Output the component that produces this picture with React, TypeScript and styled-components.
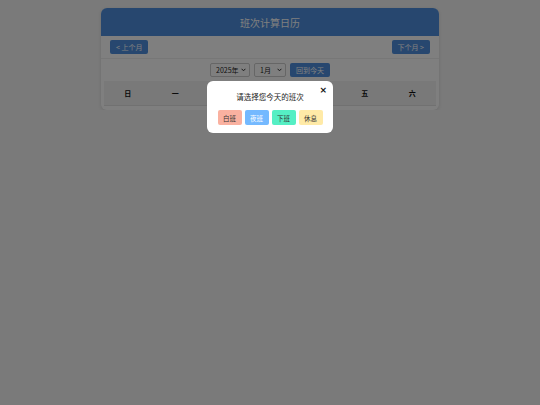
import React, { useState } from 'react'
import styled, { createGlobalStyle } from 'styled-components'

const GlobalStyle = createGlobalStyle`
  * { box-sizing: border-box; }
  body {
    margin: 0;
    background: #f5f5f5;
    font-family: "Noto Sans CJK SC", "Noto Sans", sans-serif;
    color: #333;
  }
`

const Page = styled.div`
  padding-top: 8px;
`

const Card = styled.div`
  width: 338px;
  margin: 0 auto;
  background: #fff;
  border-radius: 6px;
  box-shadow: 0 1px 4px rgba(0, 0, 0, 0.12);
  padding-bottom: 4px;
`

const Header = styled.div`
  height: 28px;
  background: #4f8fde;
  border-radius: 6px 6px 0 0;
  display: flex;
  align-items: center;
  justify-content: center;
  color: #fff;
  font-size: 10px;
`

const Nav = styled.div`
  display: flex;
  justify-content: space-between;
  align-items: center;
  padding: 4px 9px;
  border-bottom: 1px solid #eee;
`

const BlueButton = styled.button`
  height: 14px;
  padding: 0 6px;
  border: none;
  border-radius: 2px;
  background: #4f8fde;
  color: #fff;
  font-family: inherit;
  font-size: 7px;
  line-height: 14px;
`

const Controls = styled.div`
  display: flex;
  justify-content: center;
  align-items: center;
  gap: 4px;
  padding: 4px 0 4px;
`

const SelectWrap = styled.span<{ w: number }>`
  position: relative;
  display: inline-flex;
  width: ${p => p.w}px;
  height: 14px;
  svg {
    position: absolute;
    right: 4px;
    top: 5px;
    pointer-events: none;
  }
`

const Select = styled.select`
  appearance: none;
  width: 100%;
  height: 100%;
  font-family: inherit;
  font-size: 7px;
  padding: 0 8px 0 5px;
  border: 1px solid #ccc;
  border-radius: 2px;
  background: #fff;
  color: #222;
`

const Weekdays = styled.div`
  display: grid;
  grid-template-columns: repeat(7, 1fr);
  margin: 0 3px;
  background: #f3f3f3;
  border-bottom: 1px solid #e2e2e2;
`

const Weekday = styled.div`
  height: 24px;
  display: flex;
  align-items: center;
  justify-content: center;
  font-size: 7px;
  font-weight: bold;
  color: #111;
`

const Overlay = styled.div`
  position: fixed;
  inset: 0;
  background: rgba(0, 0, 0, 0.5);
  display: flex;
  justify-content: center;
  align-items: flex-start;
  padding-top: 81px;
`

const Modal = styled.div`
  position: relative;
  width: 126px;
  background: #fff;
  border-radius: 6px;
  padding: 8px 10px 8px;
  text-align: center;
`

const ModalTitle = styled.div`
  width: max-content;
  margin: 1px auto 7px;
  font-size: 7.5px;
  line-height: 13px;
  color: #222;
`

const Close = styled.span`
  position: absolute;
  top: 4px;
  right: 6px;
  font-family: "DejaVu Sans", sans-serif;
  font-size: 9px;
  font-weight: bold;
  color: #111;
  line-height: 10px;
`

const ShiftRow = styled.div`
  display: flex;
  justify-content: center;
  gap: 3px;
`

const ShiftButton = styled.button<{ bg: string; fg: string }>`
  width: 24px;
  height: 15px;
  padding: 0;
  border: none;
  border-radius: 2px;
  background: ${p => p.bg};
  color: ${p => p.fg};
  font-family: inherit;
  font-size: 6.5px;
`

const days = ['日', '一', '二', '三', '四', '五', '六']
const shifts = [
  { label: '白班', bg: '#fab1a0', fg: '#333' },
  { label: '夜班', bg: '#74b9ff', fg: '#fff' },
  { label: '下班', bg: '#55efc4', fg: '#333' },
  { label: '休息', bg: '#ffeaa7', fg: '#333' },
]

function Chevron() {
  return (
    <svg width="5" height="4" viewBox="0 0 5 4">
      <path d="M0.6 0.8 L2.5 2.8 L4.4 0.8" fill="none" stroke="#333" strokeWidth="1" />
    </svg>
  )
}

export default function App() {
  const [open, setOpen] = useState(true)
  return (
    <>
      <GlobalStyle />
      <Page>
        <Card>
          <Header>班次计算日历</Header>
          <Nav>
            <BlueButton>&lt; 上个月</BlueButton>
            <BlueButton>下个月 &gt;</BlueButton>
          </Nav>
          <Controls>
            <SelectWrap w={40}>
              <Select defaultValue="2025">
                <option value="2025">2025年</option>
              </Select>
              <Chevron />
            </SelectWrap>
            <SelectWrap w={32}>
              <Select defaultValue="1">
                <option value="1">1月</option>
              </Select>
              <Chevron />
            </SelectWrap>
            <BlueButton>回到今天</BlueButton>
          </Controls>
          <Weekdays>
            {days.map(d => (
              <Weekday key={d}>{d}</Weekday>
            ))}
          </Weekdays>
        </Card>
      </Page>
      {open && (
        <Overlay>
          <Modal>
            <Close onClick={() => setOpen(false)}>×</Close>
            <ModalTitle>请选择您今天的班次</ModalTitle>
            <ShiftRow>
              {shifts.map(s => (
                <ShiftButton key={s.label} bg={s.bg} fg={s.fg}>
                  {s.label}
                </ShiftButton>
              ))}
            </ShiftRow>
          </Modal>
        </Overlay>
      )}
    </>
  )
}
